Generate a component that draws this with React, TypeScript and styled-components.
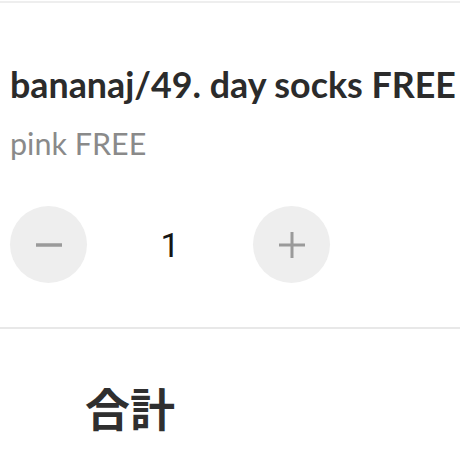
import React from 'react'
import styled, { createGlobalStyle } from 'styled-components'

const GlobalStyle = createGlobalStyle`
  body {
    margin: 0;
    background: #fff;
    font-family: Lato, "Noto Sans CJK JP", sans-serif;
  }
`;

const Page = styled.div`
  width: 460px;
  height: 460px;
  overflow: hidden;
  border-top: 2px solid #eeeeee;
  margin-top: 1px;
`;

const Item = styled.div`
  display: flex;
  flex-direction: column;
  padding: 62px 10px 44px;
  border-bottom: 2px solid #e8e8e8;
`;

const Title = styled.h2`
  margin: 0;
  font-family: Lato, sans-serif;
  font-weight: 700;
  font-size: 35.8px;
  line-height: 40px;
  color: #2b2b2b;
  white-space: nowrap;
`;

const Variant = styled.p`
  margin: 18px 0 0;
  font-family: Lato, sans-serif;
  font-size: 30.5px;
  line-height: 40px;
  color: #8a8a8a;
`;

const Stepper = styled.div`
  display: flex;
  align-items: center;
  margin-top: 43px;
`;

const RoundButton = styled.button`
  width: 77px;
  height: 77px;
  border: none;
  border-radius: 50%;
  background: #eeeeee;
  display: grid;
  place-items: center;
  padding: 0;
  cursor: pointer;
`;

const Count = styled.span`
  width: 166px;
  text-align: center;
  font-family: Roboto, sans-serif;
  font-size: 34px;
  color: #151515;
`;

const Total = styled.div`
  padding: 49px 0 0 85px;
  font-family: "Noto Sans CJK JP", sans-serif;
  font-weight: 700;
  font-size: 45px;
  line-height: 60px;
  color: #2f2f2f;
`;

const Minus = () => (
  <svg width="26" height="26" viewBox="0 0 26 26">
    <path d="M0 13h26" stroke="#9a9a9a" strokeWidth="3.5" />
  </svg>
);

const Plus = () => (
  <svg width="26" height="26" viewBox="0 0 26 26">
    <path d="M0 13h26M13 0v26" stroke="#9a9a9a" strokeWidth="3" />
  </svg>
);

export default function App() {
  const [qty, setQty] = React.useState(1);
  return (
    <Page>
      <GlobalStyle />
      <Item>
        <Title>bananaj/49. day socks FREE</Title>
        <Variant>pink FREE</Variant>
        <Stepper>
          <RoundButton onClick={() => setQty(q => Math.max(1, q - 1))}>
            <Minus />
          </RoundButton>
          <Count>{qty}</Count>
          <RoundButton onClick={() => setQty(q => q + 1)}>
            <Plus />
          </RoundButton>
        </Stepper>
      </Item>
      <Total>合計</Total>
    </Page>
  )
}
